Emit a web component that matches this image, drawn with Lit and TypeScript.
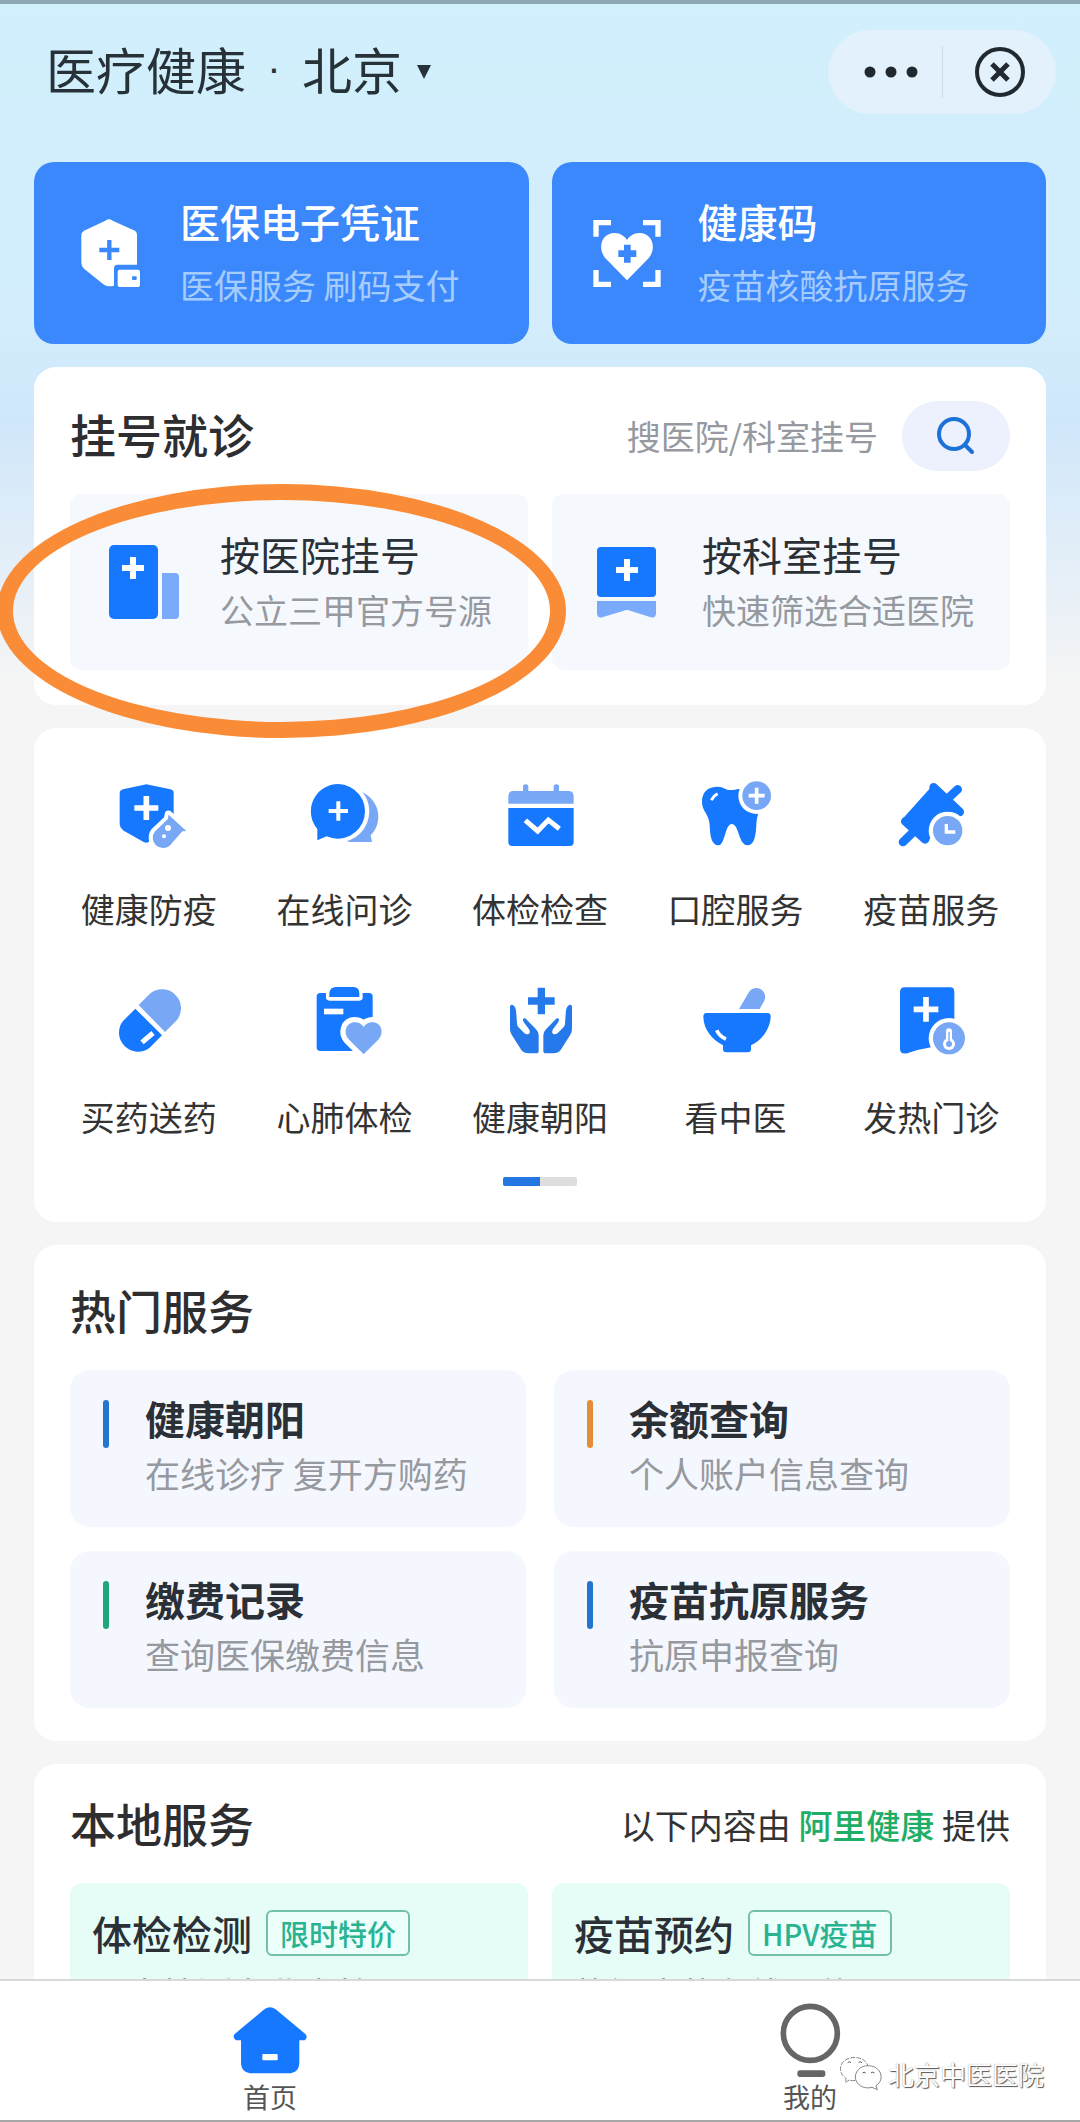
import { LitElement, html, svg, css } from "lit";
import { customElement } from "lit/decorators.js";

const BLUE = "#1677ff";
const LIGHT = "#78a8f5";

const heart = "M0 48 L-45 3 C-62 -16 -54 -48 -26 -48 C-13 -48 -5 -41 0 -34 C5 -41 13 -48 26 -48 C54 -48 62 -16 45 3Z";

const plus = (x: number, y: number, arm: number, width: number, color: string) =>
  svg`<path d="M${x - arm} ${y}H${x + arm}M${x} ${y - arm}V${y + arm}" stroke=${color} stroke-width=${width} fill="none"/>`;

const icon = (viewBox: string, content: unknown, cls = "ico") =>
  html`<svg class=${cls} viewBox=${viewBox} aria-hidden="true">${content}</svg>`;

const insurance = icon("48 87 204 204", svg`
  <path fill="#fff" d="M147 88Q152 88 158 92L225 122Q231 126 231 134V224H172Q162 224 162 236V287Q145 292 132 284L72 236Q64 228 64 218V136Q64 127 72 122L136 92Q142 88 147 88Z"/>
  <rect x="173" y="239" width="67" height="52" rx="6" fill="#fff"/>
  <rect x="216" y="259" width="14" height="11" rx="3" fill="#3a88fb"/>
  ${plus(148, 180, 30, 13, "#3a88fb")}`, "ico pass");

const healthCode = icon("69 87 204 204", svg`
  <path d="M75 140V98H120M216 98H261V140M261 240V283H216M120 283H75V240" fill="none" stroke="#fff" stroke-width="16"/>
  <path d="${heart}" transform="translate(168 200) scale(1.44 1.48)" fill="#fff"/>
  ${plus(169, 191, 27, 20, "#3a88fb")}`, "ico pass");

const hospital = icon("107 542 76 76", svg`
  <rect x="110" y="545" width="49" height="74" rx="5" fill=${BLUE}/>
  <path d="M163 573H176Q180 573 180 577V615Q180 619 176 619H163Z" fill="#7aabfa"/>
  ${plus(134, 568, 11, 6, "#fff")}`);

const department = icon("589 542 76 76", svg`
  <rect x="598" y="547" width="59" height="50" rx="4" fill=${BLUE}/>
  <path d="M598 601H657V614Q656 619 651 617L632 611Q628 609 624 611L604 617Q599 619 598 614Z" fill="#7aabfa"/>
  ${plus(628, 570, 11, 6, "#fff")}`);

const services = [
  { name: "健康防疫", icon: icon("152 51 228 228", svg`
    <path fill=${BLUE} d="M258 73L188 88Q178 91 178 100V190Q178 204 190 212L250 246Q258 251 266 245L340 190V98Q340 91 330 88Z"/>
    <path d="M325 164L378 213L366 214L328 257A31 31 0 0 1 283 215L322 178Z" fill=${LIGHT} stroke="#fff" stroke-width="24" paint-order="stroke" stroke-linejoin="round"/>
    <circle cx="323" cy="204" r="9" fill="#fff"/><circle cx="311" cy="229" r="6" fill="#fff"/>
    ${plus(258, 144, 36, 17, "#fff")}`) },
  { name: "在线问诊", icon: icon("738 51 228 228", svg`
    <path fill=${LIGHT} d="M878 90A80 80 0 0 1 932 226L936 246H868A80 80 0 0 1 878 90Z"/>
    <circle cx="835" cy="154" r="93" fill="#fff"/>
    <path fill=${BLUE} d="M835 72A82 82 0 1 1 800 229L772 241V207A82 82 0 0 1 835 72Z"/>
    ${plus(835, 153, 29, 12, "#fff")}`) },
  { name: "体检检查", icon: icon("-56 51 228 228", svg`
    <path fill=${LIGHT} d="M-37 131V109Q-37 93 -21 93H7V80Q7 73 15 73Q23 73 23 80V93H99V80Q99 73 107 73Q115 73 115 80V93H143Q159 93 159 109V131Z"/>
    <path fill=${BLUE} d="M-37 144H159V246Q159 258 147 258H-25Q-37 258 -37 246Z"/>
    <path d="M14 181L51 213L83 180L116 206" fill="none" stroke="#fff" stroke-width="15"/>`) },
  { name: "口腔服务", icon: icon("531 51 228 228", svg`
    <path fill=${BLUE} d="M543 125C543 95 562 80 590 80C610 80 612 92 635 90C650 88 665 84 690 92L714 155C705 175 707 195 705 210C702 240 695 256 680 256C652 256 655 192 632 192C612 192 612 256 593 256C568 256 567 215 566 195C564 160 543 155 543 125Z"/>
    <path d="M571 121Q577 107 590 101" stroke="#fff" stroke-width="8" fill="none"/>
    <circle cx="707" cy="107" r="55" fill="#fff"/><circle cx="707" cy="107" r="43" fill=${LIGHT}/>
    ${plus(707, 107, 24, 11, "#fff")}`) },
  { name: "疫苗服务", icon: icon("1117 51 228 228", svg`
    <g stroke=${BLUE} stroke-linecap="round" stroke-linejoin="round">
      <path fill=${BLUE} stroke-width="16" d="M1232 92L1300 152L1215 238L1150 184Z"/>
      <path fill="none" stroke-width="26" d="M1239 82L1317 156M1272 124L1311 88M1154 184L1213 238M1147 246L1182 212"/>
    </g>
    <circle cx="1281" cy="212" r="57" fill="#fff"/><circle cx="1281" cy="212" r="44" fill=${LIGHT}/>
    <path d="M1277 192V216H1304" stroke="#fff" stroke-width="10" fill="none"/>`) },
  { name: "买药送药", icon: icon("152 75 228 228", svg`
    <path fill=${LIGHT} d="M235 135L270 100A57 57 0 0 1 350 180L314 216Z"/>
    <path fill=${BLUE} d="M225 146L188 183A57 57 0 0 0 268 263L305 226Z"/>
    <path d="M245 247L278 219" stroke="#fff" stroke-width="15"/>`) },
  { name: "心肺体检", icon: icon("738 75 228 228", svg`
    <rect x="770" y="99" width="168" height="174" rx="11" fill=${BLUE}/>
    <path d="M798 90H908V112Q908 122 898 122H808Q798 122 798 112Z" fill="#fff"/>
    <path d="M808 111V99Q810 81 828 81H880Q897 81 898 99V111Z" fill=${BLUE}/>
    <rect x="792" y="146" width="58" height="17" fill="#fff"/>
    <path d="${heart}" transform="translate(911 235)" fill=${LIGHT} stroke="#fff" stroke-width="32" paint-order="stroke" stroke-linejoin="round"/>`) },
  { name: "健康朝阳", icon: icon("-56 75 228 228", svg`
    ${[0, 1].map((m) => svg`<path transform=${m ? "translate(122 0) scale(-1 1)" : ""} fill="#2579ea" d="M150 134Q154 134 154 142V208Q154 216 149 224L120 270Q112 280 98 280H76Q68 280 68 272V226Q68 216 76 208L108 175Q119 174 113 186L97 208Q92 217 97 221Q104 226 112 218L130 200Q133 198 133 190L136 150Q140 134 150 134Z"/>`)}
    ${plus(62, 123, 40, 22, "#2579ea")}`) },
  { name: "看中医", icon: icon("531 75 228 228", svg`
    <path fill=${LIGHT} d="M654 147L684 96Q692 84 707 84A27 27 0 0 1 731 120L716 147Z"/>
    <path fill=${BLUE} d="M556 159H740Q750 160 749 172C746 215 715 245 690 256V268Q690 277 680 277H616Q606 277 606 268V256C575 240 548 210 547 172Q546 160 556 159Z"/>
    <path d="M587 211Q596 230 615 237" stroke="#fff" stroke-width="11" fill="none"/>`) },
  { name: "发热门诊", icon: icon("1117 75 228 228", svg`
    <path fill=${BLUE} d="M1152 82H1288Q1301 82 1301 95V256Q1250 256 1220 264Q1190 268 1160 280Q1138 284 1138 266V96Q1138 82 1152 82Z"/>
    ${plus(1216, 148, 37, 17, "#fff")}
    <circle cx="1285" cy="235" r="61" fill="#fff"/><circle cx="1285" cy="235" r="48" fill=${LIGHT}/>
    <path d="M1285 214V250" stroke="#fff" stroke-width="18" stroke-linecap="round"/>
    <circle cx="1285" cy="252" r="18" fill="#fff"/><circle cx="1285" cy="252" r="9" fill=${LIGHT}/>
    <path d="M1285 216V250" stroke=${LIGHT} stroke-width="4"/>`) },
];

const hot = [
  { title: "健康朝阳", note: "在线诊疗 复开方购药", cls: "bar" },
  { title: "余额查询", note: "个人账户信息查询", cls: "bar orange" },
  { title: "缴费记录", note: "查询医保缴费信息", cls: "bar green" },
  { title: "疫苗抗原服务", note: "抗原申报查询", cls: "bar" },
];

@customElement("app-root")
export class AppRoot extends LitElement {
  static styles = css`
    :host {
      display: flex;
      flex-direction: column;
      height: 100vh;
      overflow: hidden;
      box-sizing: border-box;
      border-top: 4px solid #8fa6b5;
      border-bottom: 2px solid #a6a6a6;
      background: linear-gradient(#d1effc 0, #d3edfc 320px, #d0e7fb 420px, #f5f5f5 680px);
      font-family: "Noto Sans CJK SC", "Noto Sans", sans-serif;
      color: #2b2f36;
      -webkit-font-smoothing: antialiased;
    }
    * { box-sizing: border-box; }
    h1, h2, h3, p, ul { margin: 0; padding: 0; font-weight: 400; }
    button, input { font: inherit; color: inherit; border: 0; background: none; padding: 0; margin: 0; }
    a { color: inherit; text-decoration: none; }
    svg { display: block; flex: none; overflow: visible; }

    .page { flex: 1; min-height: 0; overflow: hidden auto; scrollbar-width: none; }

    .top { display: flex; justify-content: space-between; align-items: center; height: 84px; margin: 26px 24px 48px 46px; }
    .where { display: flex; align-items: center; padding-bottom: 8px; font-size: 50px; line-height: 72px; color: #263238; }
    .where h1 { font-size: 50px; }
    .sep { width: 56px; text-align: center; font-family: "Liberation Sans", sans-serif; font-size: 40px; }
    .city { display: flex; align-items: center; gap: 14px; }
    .caret { width: 16px; height: 16px; margin-top: 8px; }
    .capsule { display: flex; align-items: center; height: 84px; border-radius: 42px; background: #e2f1fc; }
    .capsule button { display: grid; place-items: center; width: 114px; height: 52px; }
    .capsule .more { padding-left: 12px; }
    .capsule button + button { border-left: 1px solid #cbdbe6; }

    .passes { display: grid; grid-template-columns: 1fr 1fr; gap: 23px; padding: 0 34px; }
    .pass-card { display: flex; align-items: center; gap: 36px; height: 182px; padding: 0 42px; border-radius: 20px; background: #3a88fb; color: #fff; }
    .ico { width: 76px; height: 76px; }
    .pass { width: 68px; height: 68px; }
    .name { font-size: 40px; line-height: 56px; white-space: nowrap; }
    .note { font-size: 35px; line-height: 48px; color: #96999f; white-space: nowrap; }
    .pass-card div { padding-bottom: 4px; }
    .pass-card .name { font-weight: 500; }
    .pass-card .note { margin-top: 12px; font-size: 34px; color: #a6ccfd; }

    .card { margin: 23px 34px 0; padding: 32px 36px 33px; border-radius: 22px; background: #fff; }
    .head { display: flex; justify-content: space-between; align-items: center; height: 70px; margin-bottom: 23px; }
    .head h2 { padding-bottom: 6px; font-size: 46px; line-height: 64px; font-weight: 500; color: #2e2e30; white-space: nowrap; }
    .pair { display: grid; grid-template-columns: 1fr 1fr; gap: 24px; }
    .wide { column-gap: 28px; }

    .booking { padding-top: 34px; padding-bottom: 35px; }
    .search { display: flex; align-items: center; gap: 24px; }
    .search input { width: 300px; font-size: 34px; line-height: 48px; text-align: right; outline: none; }
    .search input::placeholder { color: #96999f; opacity: 1; }
    .search button { display: grid; place-items: center; width: 108px; height: 70px; border-radius: 35px; background: #edf0fd; }
    .tile { position: relative; display: flex; align-items: flex-start; gap: 38px; height: 176px; padding: 32px 36px; border-radius: 12px; background: #f5f9fe; }
    .tile .ico { margin-top: 16px; }
    .tile .note { margin-top: 4px; font-size: 34px; }
    .ring { position: absolute; z-index: 1; left: -73px; right: -38px; top: -10px; height: 254px; border: 16px solid #fb8c37; border-radius: 50%; pointer-events: none; }

    .services { padding: 49px 17px 36px; }
    .services ul { display: grid; grid-template-columns: repeat(5, 1fr); row-gap: 52px; list-style: none; }
    .services a { display: flex; flex-direction: column; align-items: center; gap: 32px; font-size: 34px; line-height: 48px; color: #333; white-space: nowrap; }
    .pager { display: flex; width: 74px; height: 9px; margin: 36px auto 0; background: #dedede; border-radius: 2px; }
    .pager i { width: 50%; background: #2277e0; border-radius: 2px 0 0 2px; }

    .hot { display: flex; gap: 36px; height: 157px; padding: 20px 33px; border-radius: 20px; background: #f4f8fe; }
    .hot .name { font-weight: 700; }
    .hot .note { margin-top: 3px; }
    .bar { flex: none; width: 6px; height: 48px; margin-top: 10px; border-radius: 3px; background: #2475cd; }
    .orange { background: #e48f38; }
    .green { background: #1fa67a; }

    .local { padding-top: 26px; padding-bottom: 60px; border-radius: 22px 22px 0 0; }
    .by { font-size: 34px; line-height: 48px; color: #333; white-space: nowrap; }
    .by a { color: #1fae66; font-weight: 500; }
    .offer { height: 200px; padding: 22px; border-radius: 12px; background: #e5fdf6; }
    .offer .line { display: flex; align-items: center; gap: 14px; margin-bottom: 8px; }
    .offer .name { font-weight: 500; }
    .tag { padding: 0 12px; border: 2px solid #72bfac; border-radius: 6px; font-size: 29px; line-height: 42px; font-weight: 500; color: #2ab391; background: #ecfffb; white-space: nowrap; }

    .tabs { position: relative; display: grid; grid-template-columns: 1fr 1fr; padding: 22px 0 5px; border-top: 2px solid #d6dad9; background: #fff; }
    .tabs a { display: flex; flex-direction: column; align-items: center; font-size: 27px; line-height: 36px; color: #555; }
    .mark { position: absolute; right: 36px; bottom: 28px; display: flex; align-items: center; gap: 6px; font-size: 26px; line-height: 36px; color: #fff; text-shadow: 1px 1px 1px #555, 0 0 1px #999; }
    .mark svg { width: 42px; height: 34px; }
  `;

  render() {
    return html`
      <main class="page">
        <header class="top">
          <div class="where">
            <h1>医疗健康</h1>
            <span class="sep">·</span>
            <button class="city" type="button">北京
              <svg class="caret" viewBox="0 0 16 16" aria-hidden="true"><path d="M1 1H15L8 15Z" fill="#263238"/></svg>
            </button>
          </div>
          <div class="capsule">
            <button class="more" type="button" aria-label="更多">
              <svg width="54" height="12" viewBox="0 0 54 12"><g fill="#20292f"><circle cx="6" cy="6" r="5.5"/><circle cx="27" cy="6" r="5.5"/><circle cx="48" cy="6" r="5.5"/></g></svg>
            </button>
            <button type="button" aria-label="关闭">
              <svg width="52" height="52" viewBox="0 0 52 52" fill="none" stroke="#20292f"><circle cx="26" cy="26" r="23" stroke-width="4"/><path d="M18 18L34 34M34 18L18 34" stroke-width="5"/></svg>
            </button>
          </div>
        </header>

        <section class="passes">
          <a class="pass-card" href="#insurance">${insurance}<div><h3 class="name">医保电子凭证</h3><p class="note">医保服务 刷码支付</p></div></a>
          <a class="pass-card" href="#code">${healthCode}<div><h3 class="name">健康码</h3><p class="note">疫苗核酸抗原服务</p></div></a>
        </section>

        <section class="card booking">
          <div class="head">
            <h2>挂号就诊</h2>
            <form class="search" @submit=${(e: Event) => e.preventDefault()}>
              <input type="text" aria-label="搜医院/科室挂号" placeholder="搜医院/科室挂号">
              <button type="submit" aria-label="搜索">
                <svg width="38" height="38" viewBox="0 0 38 38" fill="none" stroke="#1d72d8" stroke-width="4" stroke-linecap="round"><circle cx="17" cy="17" r="15"/><path d="M28 28L35 35"/></svg>
              </button>
            </form>
          </div>
          <div class="pair">
            <a class="tile" href="#hospital">${hospital}<div><h3 class="name">按医院挂号</h3><p class="note">公立三甲官方号源</p></div><span class="ring"></span></a>
            <a class="tile" href="#department">${department}<div><h3 class="name">按科室挂号</h3><p class="note">快速筛选合适医院</p></div></a>
          </div>
        </section>

        <section class="card services">
          <ul>${services.map((s) => html`<li><a href="#service">${s.icon}<span>${s.name}</span></a></li>`)}</ul>
          <div class="pager"><i></i></div>
        </section>

        <section class="card">
          <div class="head"><h2>热门服务</h2></div>
          <div class="pair wide">
            ${hot.map((h) => html`<a class="hot" href="#hot"><span class=${h.cls}></span><div><h3 class="name">${h.title}</h3><p class="note">${h.note}</p></div></a>`)}
          </div>
        </section>

        <section class="card local">
          <div class="head"><h2>本地服务</h2><p class="by">以下内容由 <a href="#ali">阿里健康</a> 提供</p></div>
          <div class="pair">
            <a class="offer" href="#checkup"><div class="line"><h3 class="name">体检检测</h3><span class="tag">限时特价</span></div><p class="note">三大检测专业守护</p></a>
            <a class="offer" href="#vaccine"><div class="line"><h3 class="name">疫苗预约</h3><span class="tag">HPV疫苗</span></div><p class="note">热门疫苗在线预约</p></a>
          </div>
        </section>
      </main>

      <nav class="tabs">
        <a href="#home">${icon("366 129 228 228", svg`
          <path fill=${BLUE} d="M463 148Q480 135 497 148L586 222Q595 232 584 241H568V306Q568 340 534 340H428Q393 340 393 306V241H378Q366 232 374 222Z"/>
          <rect x="457" y="282" width="46" height="19" rx="3" fill="#fff"/>`)}<span>首页</span></a>
        <a href="#me">${icon("-24 69 228 228", svg`
          <circle cx="91" cy="160" r="81" fill="none" stroke="#666" stroke-width="17"/>
          <rect x="52" y="271" width="84" height="20" rx="8" fill="#666"/>`)}<span>我的</span></a>
        <div class="mark">
          <svg viewBox="180 234 126 102" fill="#fff" stroke="#888" stroke-width="3" aria-hidden="true">
            <path d="M226 304Q214 306 208 303L196 310L198 298C176 284 176 256 196 243C220 228 256 236 264 260" stroke-dasharray="14 4"/>
            <path d="M264 260C240 260 226 278 226 294C226 316 250 332 276 325L292 332L288 320C304 310 308 292 298 276C290 265 278 260 264 260Z"/>
            <path d="M203 251Q208 245 213 251M236 251Q241 245 246 251M248 282Q252 277 257 282M273 282Q278 277 283 282" fill="none" stroke="#555"/>
          </svg>
          <span>北京中医医院</span>
        </div>
      </nav>
    `;
  }
}
